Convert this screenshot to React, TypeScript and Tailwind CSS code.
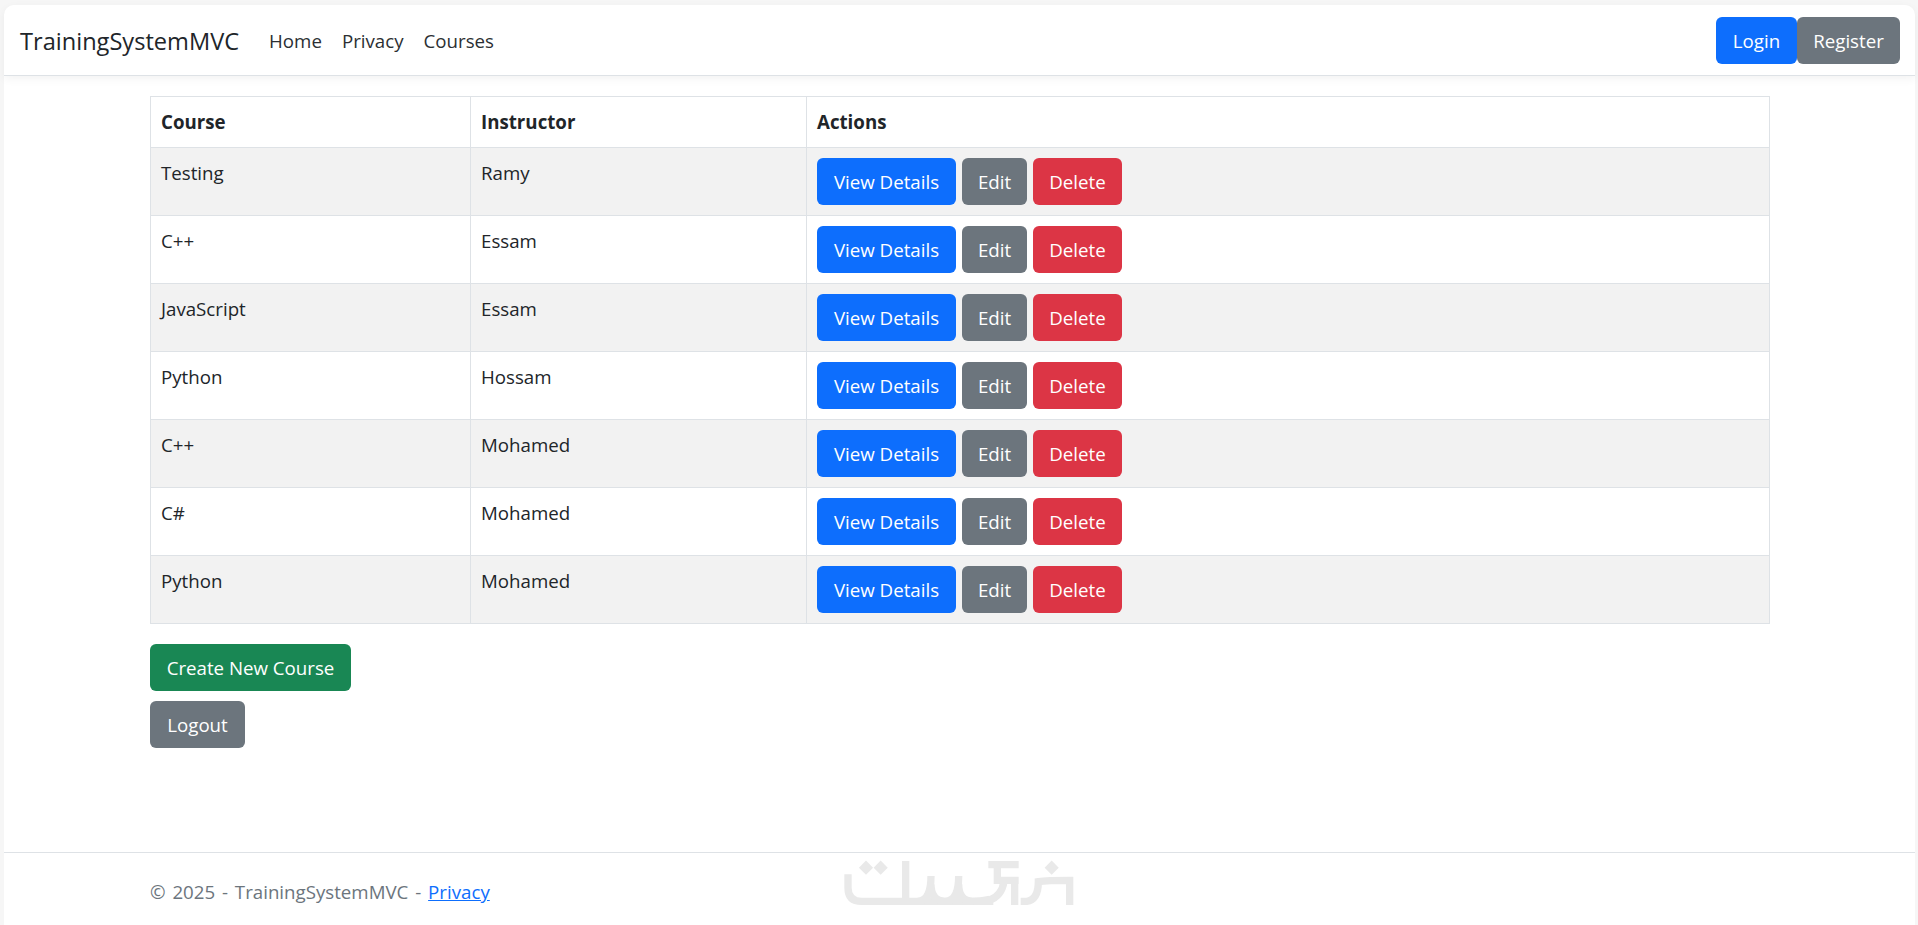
const rows = [
  ["Testing", "Ramy"],
  ["C++", "Essam"],
  ["JavaScript", "Essam"],
  ["Python", "Hossam"],
  ["C++", "Mohamed"],
  ["C#", "Mohamed"],
  ["Python", "Mohamed"],
];

function Btn({ children, className }: { children: React.ReactNode; className: string }) {
  return (
    <a className={"flex h-[47px] items-center justify-center rounded-[6px] text-white whitespace-nowrap " + className}>
      {children}
    </a>
  );
}

function Logo() {
  return (
    <svg width="320" height="85" viewBox="0 0 960 255" fill="none" className="absolute left-[776px] top-[-12px]">
      <g stroke="#e9e9e9" strokeWidth="22">
        <path d="M204 100V140Q204 181 245 181H640" />
        <path d="M377 60V192" />
        <path d="M412 181Q453 181 453 105M453 130Q453 181 495 181Q536 181 536 105M536 130Q536 181 578 181Q600 181 630 175" />
        <path d="M625 71H716M652 71V118H716M704 118V192" />
        <path d="M628 178Q665 165 672 122" />
        <path d="M722 181H740Q775 176 775 122Q800 118 869 118V192" />
      </g>
      <g fill="#e9e9e9">
        <rect x="243" y="65" width="30" height="30" transform="rotate(45 258 80)" />
        <rect x="287" y="65" width="30" height="30" transform="rotate(45 302 80)" />
        <rect x="800" y="65" width="30" height="30" transform="rotate(45 815 80)" />
      </g>
    </svg>
  );
}

export default function App() {
  return (
    <div className="h-[925px] overflow-hidden bg-[#f6f6f6] pl-[4px] pr-[3px] pt-[5px] font-['Open_Sans',sans-serif] text-[18.7px] leading-[30px] text-[#212529]">
      <div className="flex h-[920px] flex-col rounded-t-[10px] bg-white">
        <nav className="flex h-[71px] shrink-0 items-center justify-between rounded-t-[10px] border-b border-[#dee2e6] pl-[16px] pr-[15px] pt-[1px] shadow-[0_3px_10px_rgba(0,0,0,0.05)]">
          <div className="flex items-center">
            <span className="mr-[30px] text-[23.6px]">TrainingSystemMVC</span>
            <div className="flex gap-[20px] text-[#2b2f33]">
              <a>Home</a>
              <a>Privacy</a>
              <a>Courses</a>
            </div>
          </div>
          <div className="flex">
            <Btn className="w-[81px] bg-[#0d6efd]">Login</Btn>
            <Btn className="w-[103px] bg-[#6c757d]">Register</Btn>
          </div>
        </nav>
        <main className="ml-[146px] w-[1620px] grow pt-[20px]">
          <table className="w-full table-fixed border-collapse">
            <thead>
              <tr className="h-[51px] font-bold">
                <th className="w-[320px] border border-[#dee2e6] px-[10px] text-left">Course</th>
                <th className="w-[336px] border border-[#dee2e6] px-[10px] text-left">Instructor</th>
                <th className="border border-[#dee2e6] px-[10px] text-left">Actions</th>
              </tr>
            </thead>
            <tbody>
              {rows.map((r, i) => (
                <tr key={i} className={"h-[68px] " + (i % 2 === 0 ? "bg-[#f2f2f2]" : "bg-white")}>
                  <td className="border border-[#dee2e6] px-[10px] pt-[10px] align-top">{r[0]}</td>
                  <td className="border border-[#dee2e6] px-[10px] pt-[10px] align-top">{r[1]}</td>
                  <td className="border border-[#dee2e6] px-[10px] pt-[10px] align-top">
                    <div className="flex gap-[6px]">
                      <Btn className="w-[139px] bg-[#0d6efd]">View Details</Btn>
                      <Btn className="w-[65px] bg-[#6c757d]">Edit</Btn>
                      <Btn className="w-[89px] bg-[#dc3545]">Delete</Btn>
                    </div>
                  </td>
                </tr>
              ))}
            </tbody>
          </table>
          <div className="mt-[20px] flex flex-col items-start gap-[10px]">
            <Btn className="w-[201px] bg-[#198754]">Create New Course</Btn>
            <Btn className="w-[95px] bg-[#6c757d]">Logout</Btn>
          </div>
        </main>
        <footer className="relative h-[73px] shrink-0 border-t border-[#dee2e6] pl-[146px] pt-[24px] text-[#6c757d] [word-spacing:2px]">
          © 2025 - TrainingSystemMVC - <a className="text-[#0d6efd] underline">Privacy</a>
          <Logo />
        </footer>
      </div>
    </div>
  );
}
